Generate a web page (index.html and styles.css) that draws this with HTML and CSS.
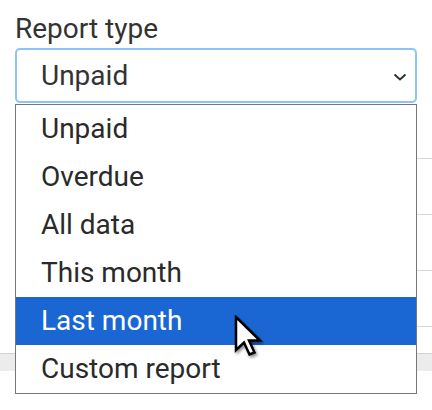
FILE: index.html
```html
<!DOCTYPE html>
<html lang="en">
<head>
  <meta charset="UTF-8" />
  <title>Reports</title>
  <link rel="stylesheet" href="styles.css">
</head>
<body>
  <div class="report-form">
    <label class="field-label" for="reportType">Report type</label>
    <div class="select-wrap">
      <div id="reportType" class="select-box">
        <span>Unpaid</span>
        <svg class="chevron" width="14" height="8" viewBox="0 0 14 8">
          <polyline points="1.5,1.5 7,6.5 12.5,1.5" fill="none" stroke="#333" stroke-width="2" />
        </svg>
      </div>
      <ul class="select-list">
        <li>Unpaid</li>
        <li>Overdue</li>
        <li>All data</li>
        <li>This month</li>
        <li class="hover">Last month</li>
        <li>Custom report</li>
      </ul>
      <svg class="cursor" width="30" height="44" viewBox="0 0 30 44">
        <defs>
          <filter id="cursorShadow" x="-30%" y="-30%" width="160%" height="160%">
            <feDropShadow dx="1.5" dy="2" stdDeviation="1.5" flood-color="#000" flood-opacity="0.45" />
          </filter>
        </defs>
        <polygon points="2,2 2,35 10,27.5 15.5,39.5 20.5,37.5 15,25.5 26,25.5" fill="#fff" stroke="#000" stroke-width="2.5" stroke-linejoin="miter" filter="url(#cursorShadow)" />
      </svg>
    </div>
    <div class="report-table">
      <div class="row"></div>
      <div class="row"></div>
      <div class="row"></div>
      <div class="row"></div>
      <div class="table-foot"></div>
    </div>
  </div>
</body>
</html>
```

FILE: styles.css
```css
html, body {
  height: 100%;
}
body {
  margin: 0;
  min-height: 410px;
  background: #fff;
  color: #333;
  font-family: Roboto, "Noto Sans", sans-serif;
}
.report-form {
  padding: 12px 0 0 0;
}
.field-label {
  display: block;
  margin-left: 15px;
  font-size: 28px;
  line-height: 34px;
  margin-bottom: 2px;
}
.select-wrap {
  position: relative;
  margin: 0 15px;
}
.select-box {
  height: 51px;
  border: 2px solid #8cc3f8;
  border-radius: 5px;
  display: flex;
  align-items: center;
  justify-content: space-between;
  padding: 0 8px 0 24px;
  font-size: 28px;
}
.chevron {
  margin-top: 2px;
}
.select-list {
  position: absolute;
  top: 56px;
  left: 0;
  right: 0;
  margin: 0;
  padding: 0;
  list-style: none;
  background: #fff;
  border: 1px solid #777;
  z-index: 10;
}
.select-list li {
  height: 48px;
  line-height: 48px;
  padding-left: 25px;
  font-size: 28px;
  color: #2a2a2a;
}
.select-list li.hover {
  background: #1a67d3;
  color: #fff;
}
.cursor {
  position: absolute;
  left: 219px;
  top: 267px;
  z-index: 20;
}
.report-table {
  margin: 0 0 0 30px;
}
.row {
  height: 55px;
  border-bottom: 1px solid #d6d6d6;
}
.table-foot {
  margin: 26px 0 0 -30px;
  height: 17px;
  border-top: 1px solid #d0d0d0;
  background: #ececec;
}
```
